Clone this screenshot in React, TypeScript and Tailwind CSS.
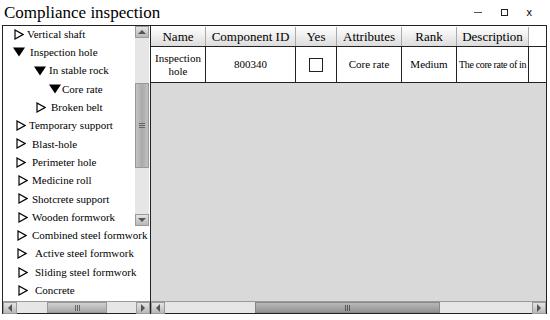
import React from "react";

type Node = { label: string; open: boolean; tri: string; gap: string };

const nodes: Node[] = [
  { label: "Vertical shaft", open: false, tri: "pl-[11px]", gap: "w-[3px]" },
  { label: "Inspection hole", open: true, tri: "pl-[10px]", gap: "w-[5px]" },
  { label: "In stable rock", open: true, tri: "pl-[31px]", gap: "w-[3px]" },
  { label: "Core rate", open: true, tri: "pl-[46px]", gap: "w-[1px]" },
  { label: "Broken belt", open: false, tri: "pl-[33px]", gap: "w-[5px]" },
  { label: "Temporary support", open: false, tri: "pl-[13px]", gap: "w-[3px]" },
  { label: "Blast-hole", open: false, tri: "pl-[13px]", gap: "w-[6px]" },
  { label: "Perimeter hole", open: false, tri: "pl-[13px]", gap: "w-[6px]" },
  { label: "Medicine roll", open: false, tri: "pl-[15px]", gap: "w-[4px]" },
  { label: "Shotcrete support", open: false, tri: "pl-[15px]", gap: "w-[4px]" },
  { label: "Wooden formwork", open: false, tri: "pl-[15px]", gap: "w-[4px]" },
  { label: "Combined steel formwork", open: false, tri: "pl-[14px]", gap: "w-[5px]" },
  { label: "Active steel formwork", open: false, tri: "pl-[14px]", gap: "w-[8px]" },
  { label: "Sliding steel formwork", open: false, tri: "pl-[15px]", gap: "w-[7px]" },
  { label: "Concrete", open: false, tri: "pl-[15px]", gap: "w-[7px]" },
];

function Tri({ open }: { open: boolean }) {
  if (open) {
    return (
      <svg width="12" height="10" viewBox="0 0 12 10" className="shrink-0">
        <polygon points="0,0.5 12,0.5 6,9.5" fill="#000" />
      </svg>
    );
  }
  return (
    <svg width="10" height="11" viewBox="0 0 10 11" className="shrink-0">
      <polygon points="1,1 9,5.5 1,10" fill="none" stroke="#000" strokeWidth="1.2" />
    </svg>
  );
}

function Arrow({ dir }: { dir: "up" | "down" | "left" | "right" }) {
  const pts = {
    up: "1,6 5,2 9,6",
    down: "1,2 5,6 9,2",
    left: "6,1 2,5 6,9",
    right: "2,1 6,5 2,9",
  }[dir];
  const vert = dir === "up" || dir === "down";
  return (
    <div className="w-[14px] h-[12px] shrink-0 flex items-center justify-center bg-gradient-to-b from-[#e4e4e4] to-[#b8b8b8] border border-[#9a9a9a]">
      <svg width={vert ? 10 : 8} height={vert ? 8 : 10} viewBox={vert ? "0 0 10 8" : "0 0 8 10"}>
        <polygon points={pts} fill="#555" />
      </svg>
    </div>
  );
}

function HScroll({ thumb }: { thumb: string }) {
  return (
    <div className="h-[12px] flex bg-[#e6e6e6] border-t border-[#9a9a9a]">
      <Arrow dir="left" />
      <div className="flex-1 flex">
        {thumb === "left" ? (
          <>
            <div className="w-[30px]" />
            <div className="w-[60px] bg-gradient-to-b from-[#d0d0d0] to-[#a8a8a8] border border-[#999] flex items-center justify-center">
              <div className="w-[5px] h-[6px] border-x border-[#666] flex justify-center"><div className="w-px bg-[#666]" /></div>
            </div>
          </>
        ) : (
          <>
            <div className="w-[90px]" />
            <div className="w-[185px] bg-gradient-to-b from-[#b8b8b8] to-[#949494] border border-[#888] flex items-center justify-center">
              <div className="w-[5px] h-[6px] border-x border-[#555] flex justify-center"><div className="w-px bg-[#555]" /></div>
            </div>
          </>
        )}
      </div>
      <Arrow dir="right" />
    </div>
  );
}

const cols = [
  { h: "Name", w: "w-[55px]", v: "Inspection hole" },
  { h: "Component ID", w: "w-[90px]", v: "800340" },
  { h: "Yes", w: "w-[41px]", v: "" },
  { h: "Attributes", w: "w-[65px]", v: "Core rate" },
  { h: "Rank", w: "w-[55px]", v: "Medium" },
  { h: "Description", w: "w-[72px]", v: "The core rate of in" },
];

export default function App() {
  return (
    <div className="w-[550px] h-[320px] bg-white flex flex-col text-black font-['Liberation_Serif',serif]">
      <div className="h-[25px] flex items-center justify-between pl-[4px] pr-[18px]">
        <span className="text-[17px] leading-none">Compliance inspection</span>
        <div className="flex items-center gap-[19px] text-[11px] font-['Liberation_Sans',sans-serif]">
          <div className="w-[8px] h-px bg-[#555]" />
          <div className="w-[7px] h-[7px] border border-[#222]" />
          <span>x</span>
        </div>
      </div>
      <div className="h-[289px] ml-[2px] mr-[3px] flex border border-[#222]">
        <div className="w-[148px] flex flex-col border-r border-[#222]">
          <div className="flex-1 relative overflow-hidden">
            <div className="-mt-[1px]">
              {nodes.map((n) => (
                <div key={n.label} className={`h-[18.3px] flex items-center text-[11px] whitespace-nowrap ${n.tri}`}>
                  <Tri open={n.open} />
                  <div className={n.gap} />
                  <span>{n.label}</span>
                </div>
              ))}
            </div>
            <div className="absolute top-0 right-px w-[14px] h-[200px] flex flex-col bg-[#e6e6e6]">
              <Arrow dir="up" />
              <div className="h-[45px]" />
              <div className="h-[85px] bg-gradient-to-r from-[#c4c4c4] via-[#aaaaaa] to-[#c0c0c0] border border-[#999] flex items-center justify-center">
                <div className="w-[6px] h-[5px] border-y border-[#666] flex items-center"><div className="h-px w-full bg-[#666]" /></div>
              </div>
              <div className="flex-1" />
              <Arrow dir="down" />
            </div>
          </div>
          <HScroll thumb="left" />
        </div>
        <div className="flex-1 flex flex-col">
          <div className="flex-1 bg-[#d9d9d9] overflow-hidden">
            <div className="flex bg-white h-[20px] text-[13px] pt-[1px]">
              {cols.map((c) => (
                <div key={c.h} className={`${c.w} shrink-0 flex items-center justify-center bg-gradient-to-b from-white to-[#dcdcdc] border-r border-[#aaa] whitespace-nowrap`}>
                  {c.h}
                </div>
              ))}
              <div className="flex-1 bg-white" />
            </div>
            <div className="flex bg-white h-[37px] text-[11px] border-y border-[#222]">
              {cols.map((c) => (
                <div key={c.h} className={`${c.w} shrink-0 flex items-center justify-center border-r border-[#222] text-center leading-[13px] overflow-hidden`}>
                  {c.h === "Yes" ? (
                    <div className="w-[14px] h-[14px] border border-[#222]" />
                  ) : c.h === "Description" ? (
                    <span className="whitespace-nowrap pl-[2px] w-full text-left text-[10px] tracking-[-0.35px]">{c.v}</span>
                  ) : c.h === "Name" ? (
                    <span>Inspection<br />hole</span>
                  ) : (
                    c.v
                  )}
                </div>
              ))}
              <div className="flex-1 bg-white" />
            </div>
          </div>
          <HScroll thumb="mid" />
        </div>
      </div>
    </div>
  );
}
